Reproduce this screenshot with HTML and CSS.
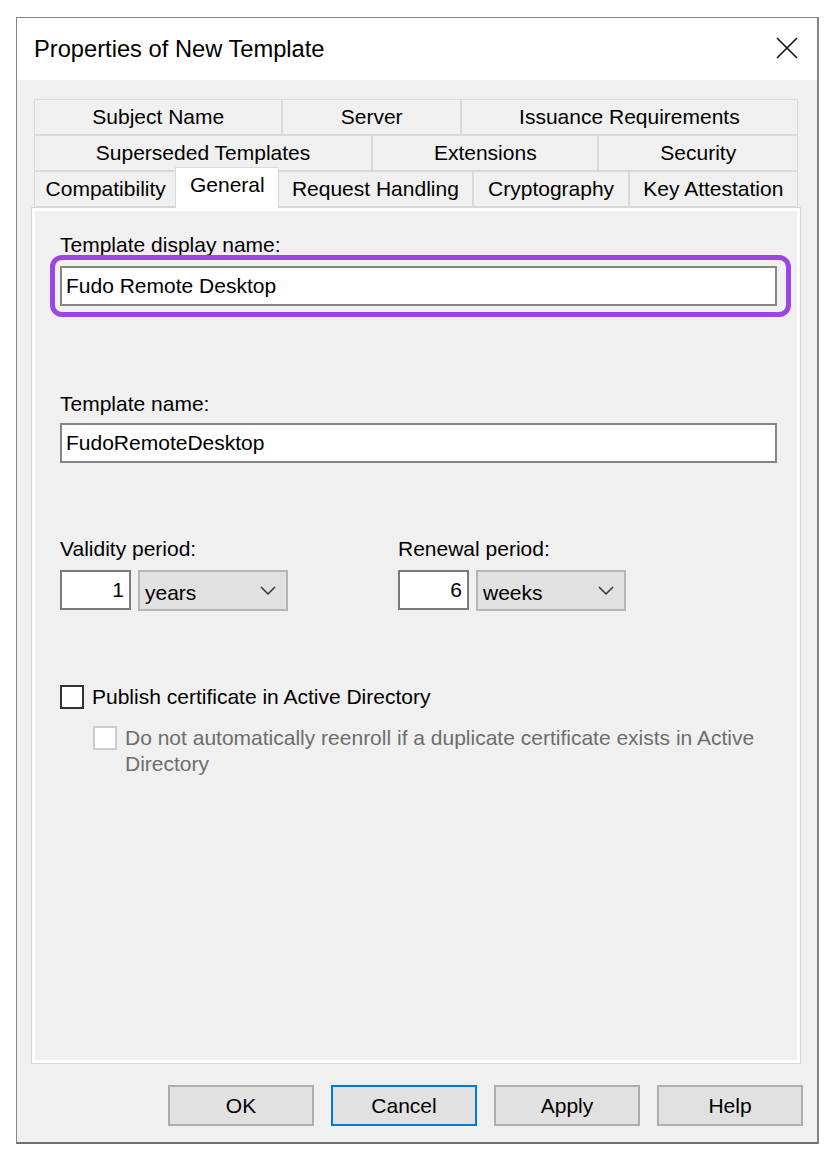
FILE: index.html
```html
<!DOCTYPE html>
<html lang="en">
<head>
    <meta charset="UTF-8">
    <meta name="viewport" content="width=device-width, initial-scale=1.0">
    <title>Properties of New Template</title>
    <link rel="stylesheet" href="styles.css">
</head>
<body>
    <div class="dialog">
        <div class="titlebar">
            <span class="title">Properties of New Template</span>
            <svg class="close" width="22" height="22" viewBox="0 0 22 22">
                <path d="M1 1 L21 21 M21 1 L1 21" stroke="#111" stroke-width="1.6" fill="none"/>
            </svg>
        </div>

        <div class="content">
            <div class="tabs">
                <div class="tab-row">
                    <div class="tab">Subject Name</div>
                    <div class="tab">Server</div>
                    <div class="tab">Issuance Requirements</div>
                </div>
                <div class="tab-row">
                    <div class="tab">Superseded Templates</div>
                    <div class="tab">Extensions</div>
                    <div class="tab">Security</div>
                </div>
                <div class="tab-row">
                    <div class="tab">Compatibility</div>
                    <div class="tab active">General</div>
                    <div class="tab">Request Handling</div>
                    <div class="tab">Cryptography</div>
                    <div class="tab">Key Attestation</div>
                </div>
            </div>

            <div class="panel">
                <div class="field">
                    <div class="label">Template display name:</div>
                    <div class="input-wrap">
                        <div class="textbox">Fudo Remote Desktop</div>
                        <div class="highlight"></div>
                    </div>
                </div>

                <div class="field field-name">
                    <div class="label">Template name:</div>
                    <div class="textbox">FudoRemoteDesktop</div>
                </div>

                <div class="periods">
                    <div class="period">
                        <div class="label">Validity period:</div>
                        <div class="period-inputs">
                            <div class="numbox">1</div>
                            <div class="combo">
                                <span>years</span>
                                <svg width="16" height="10" viewBox="0 0 16 10">
                                    <polyline points="1,1 8,8 15,1" stroke="#333" stroke-width="1.5" fill="none"/>
                                </svg>
                            </div>
                        </div>
                    </div>
                    <div class="period">
                        <div class="label">Renewal period:</div>
                        <div class="period-inputs">
                            <div class="numbox">6</div>
                            <div class="combo">
                                <span>weeks</span>
                                <svg width="16" height="10" viewBox="0 0 16 10">
                                    <polyline points="1,1 8,8 15,1" stroke="#333" stroke-width="1.5" fill="none"/>
                                </svg>
                            </div>
                        </div>
                    </div>
                </div>

                <div class="checkrow">
                    <span class="check"></span>
                    <span>Publish certificate in Active Directory</span>
                </div>
                <div class="checkrow sub disabled">
                    <span class="check"></span>
                    <span>Do not automatically reenroll if a duplicate certificate exists in Active Directory</span>
                </div>
            </div>

            <div class="buttons">
                <div class="btn">OK</div>
                <div class="btn default">Cancel</div>
                <div class="btn">Apply</div>
                <div class="btn">Help</div>
            </div>
        </div>
    </div>
</body>
</html>
```

FILE: styles.css
```css
body {
    margin: 0;
    background-color: #fff;
    font-family: "Liberation Sans", Arial, sans-serif;
    font-size: 21px;
    color: #000;
}
.dialog {
    box-sizing: border-box;
    width: 803px;
    height: 1127px;
    margin: 17px 0 0 16px;
    border: 1px solid #858585;
    border-right-width: 2px;
    border-bottom-width: 2px;
    border-bottom-color: #6f6f6f;
    background-color: #f0f0f0;
}
.titlebar {
    height: 62px;
    background-color: #fff;
    display: flex;
    align-items: center;
    justify-content: space-between;
    padding: 0 19px 0 17px;
}
.title {
    font-size: 23.7px;
}
.close {
    margin-top: -2px;
}
.content {
    padding: 19px 14px 16px 14px;
}

/* Tabs */
.tabs {
    margin: 0 5px 0 3px;
}
.tab-row {
    display: flex;
    height: 36px;
}
.tab {
    flex: 1 1 auto;
    padding: 0 12px;
    border: 1px solid #d9d9d9;
    line-height: 34px;
    text-align: center;
    white-space: nowrap;
}
.tab-row:last-child .tab:first-child {
    padding: 0 9px;
}
.tab.active {
    background-color: #fff;
    border-bottom: none;
    margin: -4px -2px -1px;
    position: relative;
    z-index: 1;
}

/* Panel */
.panel {
    box-sizing: border-box;
    width: 770px;
    height: 857px;
    border: 1px solid #d6d6d6;
    box-shadow: inset 0 0 0 3px #fff;
    padding: 25px 23px 0 28px;
}
.label {
    line-height: 24px;
    margin-bottom: 9px;
}
.input-wrap {
    position: relative;
}
.textbox {
    box-sizing: border-box;
    height: 40px;
    background-color: #fff;
    border: 2px solid #858585;
    padding-left: 4px;
    line-height: 36px;
}
.highlight {
    position: absolute;
    left: -10px;
    top: -11px;
    right: -14px;
    bottom: -11px;
    border: 5px solid #9b45e4;
    border-radius: 12px;
}
.field-name {
    margin-top: 86px;
}
.field-name .label {
    margin-bottom: 7px;
}
.periods {
    display: flex;
    margin-top: 74px;
}
.period {
    width: 338px;
}
.period-inputs {
    display: flex;
    gap: 7px;
}
.numbox {
    box-sizing: border-box;
    width: 71px;
    height: 40px;
    background-color: #fff;
    border: 2px solid #7a7a7a;
    text-align: right;
    padding-right: 5px;
    line-height: 36px;
}
.combo {
    box-sizing: border-box;
    width: 150px;
    height: 41px;
    background-color: #e1e1e1;
    border: 2px solid #b5b5b5;
    display: flex;
    align-items: center;
    justify-content: space-between;
    padding: 4px 10px 0 5px;
}
.combo svg {
    margin-top: -4px;
}
.checkrow {
    display: flex;
    align-items: flex-start;
    gap: 8px;
    margin-top: 74px;
    line-height: 24px;
}
.check {
    box-sizing: border-box;
    flex: none;
    width: 24px;
    height: 24px;
    background-color: #fff;
    border: 2px solid #333;
}
.checkrow.sub {
    margin: 16px 0 0 33px;
    line-height: 26px;
}
.checkrow.sub .check {
    margin-top: 1px;
}
.disabled {
    color: #6d6d6d;
}
.disabled .check {
    border-color: #cccccc;
}

/* Buttons */
.buttons {
    display: flex;
    justify-content: flex-end;
    gap: 17px;
    margin-top: 21px;
}
.btn {
    box-sizing: border-box;
    width: 146px;
    height: 41px;
    background-color: #e1e1e1;
    border: 2px solid #adadad;
    text-align: center;
    line-height: 37px;
}
.btn.default {
    border-color: #0078d7;
}
```
